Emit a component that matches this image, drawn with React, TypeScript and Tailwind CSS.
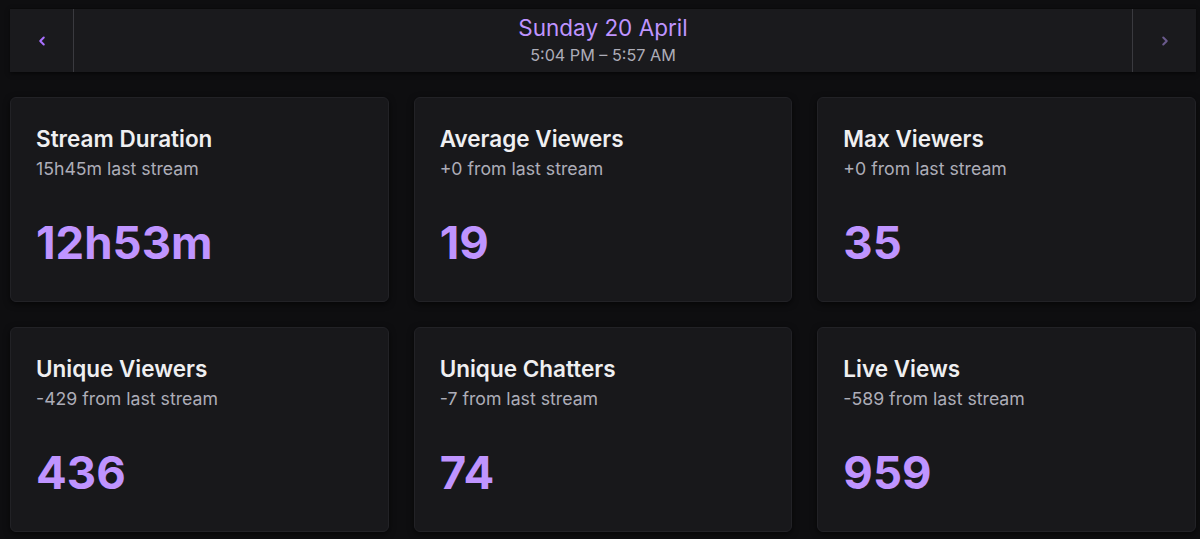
import { ChevronLeft, ChevronRight } from 'lucide-react';

interface StatCardProps {
  title: string;
  sub: string;
  value: string;
}

function StatCard({ title, sub, value }: StatCardProps) {
  return (
    <div className="h-[205px] rounded-md bg-[#18181b] border border-[#222226] shadow-[0_2px_6px_rgba(0,0,0,0.6)] px-[25px] pt-[26px] flex flex-col">
      <span className="text-[22.5px] font-semibold leading-[30px] text-[#efeff1]">{title}</span>
      <span className="mt-[3px] text-[17.7px] leading-[24px] text-[#adadb8]">{sub}</span>
      <span className="mt-[34px] text-[45.5px] font-bold leading-[56px] text-[#bf94ff]">{value}</span>
    </div>
  );
}

const stats = [
  { title: 'Stream Duration', sub: '15h45m last stream', value: '12h53m' },
  { title: 'Average Viewers', sub: '+0 from last stream', value: '19' },
  { title: 'Max Viewers', sub: '+0 from last stream', value: '35' },
  { title: 'Unique Viewers', sub: '-429 from last stream', value: '436' },
  { title: 'Unique Chatters', sub: '-7 from last stream', value: '74' },
  { title: 'Live Views', sub: '-589 from last stream', value: '959' },
];

export default function App() {
  return (
    <div
      className="w-[1200px] h-[539px] overflow-hidden bg-[#0e0e10] pl-[10px] pr-[4px] pt-[8px]"
      style={{ fontFamily: 'Inter, "Noto Sans", sans-serif' }}
    >
      {/* Date header */}
      <div className="h-[64px] flex bg-[#1a1a1d] border-t border-[#0a0a0b] shadow-[0_2px_4px_rgba(0,0,0,0.5)]">
        <button className="w-[64px] shrink-0 flex items-center justify-center border-r border-[#3a3a3f]">
          <ChevronLeft size={14} strokeWidth={3.5} className="text-[#a970ff]" />
        </button>
        <div className="flex-1 flex flex-col items-center justify-center">
          <span className="text-[22.5px] leading-[26px] text-[#bf94ff]">Sunday 20 April</span>
          <span className="mt-[3px] text-[16.2px] leading-[22px] text-[#adadb8]">5:04 PM – 5:57 AM</span>
        </div>
        <button className="w-[64px] shrink-0 flex items-center justify-center border-l border-[#3a3a3f]">
          <ChevronRight size={14} strokeWidth={3.5} className="text-[#6a5a8c]" />
        </button>
      </div>

      {/* Stats */}
      <div className="mt-[25px] grid grid-cols-3 gap-x-[25px] gap-y-[25px]">
        {stats.map((s) => (
          <StatCard key={s.title} title={s.title} sub={s.sub} value={s.value} />
        ))}
      </div>
    </div>
  );
}
